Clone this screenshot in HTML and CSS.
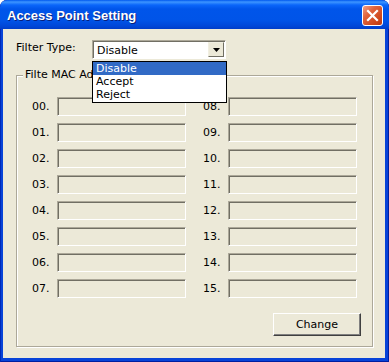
FILE: index.html
```html
<!DOCTYPE html>
<html lang="en">
<head>
    <meta charset="UTF-8">
    <title>Access Point Setting</title>
    <link rel="stylesheet" href="styles.css">
</head>
<body>
    <div class="window">
        <div class="titlebar">
            <span class="title">Access Point Setting</span>
            <span class="close">
                <svg width="13" height="13" viewBox="0 0 13 13">
                    <path d="M2 2 L11 11 M11 2 L2 11" stroke="#fff" stroke-width="2.2" stroke-linecap="square"/>
                </svg>
            </span>
        </div>
        <div class="body">
            <div class="filter-row">
                <span class="filter-label">Filter Type:</span>
                <div class="combo">
                    <span class="combo-value">Disable</span>
                    <span class="combo-arrow">
                        <svg width="7" height="4" viewBox="0 0 7 4"><path d="M0 0 H7 L3.5 4 Z" fill="#000"/></svg>
                    </span>
                    <ul class="dropdown">
                        <li class="selected">Disable</li>
                        <li>Accept</li>
                        <li>Reject</li>
                    </ul>
                </div>
            </div>
            <div class="group">
                <span class="legend">Filte MAC Address</span>
                <div class="columns">
                    <div class="column">
                        <div class="mac-row"><span class="mac-label">00.</span><span class="mac-field"></span></div>
                        <div class="mac-row"><span class="mac-label">01.</span><span class="mac-field"></span></div>
                        <div class="mac-row"><span class="mac-label">02.</span><span class="mac-field"></span></div>
                        <div class="mac-row"><span class="mac-label">03.</span><span class="mac-field"></span></div>
                        <div class="mac-row"><span class="mac-label">04.</span><span class="mac-field"></span></div>
                        <div class="mac-row"><span class="mac-label">05.</span><span class="mac-field"></span></div>
                        <div class="mac-row"><span class="mac-label">06.</span><span class="mac-field"></span></div>
                        <div class="mac-row"><span class="mac-label">07.</span><span class="mac-field"></span></div>
                    </div>
                    <div class="column">
                        <div class="mac-row"><span class="mac-label">08.</span><span class="mac-field"></span></div>
                        <div class="mac-row"><span class="mac-label">09.</span><span class="mac-field"></span></div>
                        <div class="mac-row"><span class="mac-label">10.</span><span class="mac-field"></span></div>
                        <div class="mac-row"><span class="mac-label">11.</span><span class="mac-field"></span></div>
                        <div class="mac-row"><span class="mac-label">12.</span><span class="mac-field"></span></div>
                        <div class="mac-row"><span class="mac-label">13.</span><span class="mac-field"></span></div>
                        <div class="mac-row"><span class="mac-label">14.</span><span class="mac-field"></span></div>
                        <div class="mac-row"><span class="mac-label">15.</span><span class="mac-field"></span></div>
                    </div>
                </div>
                <div class="actions">
                    <button class="btn">Change</button>
                </div>
            </div>
        </div>
    </div>
</body>
</html>
```

FILE: styles.css
```css
html,
body {
    margin: 0;
    padding: 0;
    background: #fff;
}
body {
    font-family: "DejaVu Sans", sans-serif;
    font-size: 11px;
    color: #000;
}
.window {
    width: 389px;
    height: 362px;
    box-sizing: border-box;
    display: flex;
    flex-direction: column;
    background: #0843d8;
    border-radius: 7px 7px 0 0;
    overflow: hidden;
    padding: 0 4px 4px 3px;
    box-shadow: inset 1px 0 #0029b8, inset -1px 0 #001ea0, inset 0 -1px #001ea0;
}
.titlebar {
    height: 29px;
    margin: 0 -4px 0 -3px;
    padding: 0 6px 0 7px;
    display: flex;
    align-items: center;
    justify-content: space-between;
    background: linear-gradient(to bottom, #0058ee 0, #3d95ff 2px, #0a66fa 5px, #0055ea 9px, #0054e8 20px, #0047d8 26px, #003dc8 29px);
    border-radius: 7px 7px 0 0;
}
.title {
    font-family: "Liberation Sans", sans-serif;
    font-weight: bold;
    font-size: 13px;
    color: #fff;
    text-shadow: 1px 1px #0a1e7a;
    padding-top: 2px;
}
.close {
    width: 19px;
    height: 19px;
    border: 1px solid #fff;
    border-radius: 3px;
    display: flex;
    align-items: center;
    justify-content: center;
    background: linear-gradient(135deg, #f0a085 0, #e0633c 35%, #cc4418 80%, #b83a12 100%);
    margin-top: 2px;
}
.body {
    flex: 1;
    background: #ece9d8;
    padding: 11px 0 0 13px;
    display: flex;
    flex-direction: column;
}
.filter-row {
    display: flex;
    align-items: center;
    height: 19px;
}
.filter-label {
    width: 76px;
    margin-top: -4px;
}
.combo {
    position: relative;
    width: 134px;
    height: 19px;
    box-sizing: border-box;
    background: #fff;
    border: 1px solid;
    border-color: #aca899 #fff #fff #aca899;
    box-shadow: inset 1px 1px #716f64;
    display: flex;
    align-items: center;
    justify-content: space-between;
    padding: 1px 1px 0 4px;
}
.combo-arrow {
    width: 16px;
    height: 15px;
    box-sizing: border-box;
    background: #ece9d8;
    border: 1px solid;
    border-color: #f1efe2 #716f64 #716f64 #f1efe2;
    display: flex;
    align-items: center;
    justify-content: center;
    margin-bottom: 1px;
}
.dropdown {
    position: absolute;
    left: -1px;
    top: 20px;
    width: 135px;
    margin: 0;
    padding: 0;
    list-style: none;
    box-sizing: border-box;
    background: #fff;
    border: 1px solid #000;
    padding-bottom: 1px;
    z-index: 2;
}
.dropdown li {
    height: 13px;
    line-height: 13px;
    padding-left: 3px;
}
.dropdown li.selected {
    background: #316ac5;
    color: #fff;
}
.group {
    position: relative;
    margin-top: 16px;
    width: 357px;
    height: 272px;
    box-sizing: border-box;
    border: 1px solid #aca899;
    box-shadow: inset 1px 1px #fff, 1px 1px #fff;
    padding: 21px 13px 0 15px;
    display: flex;
    flex-direction: column;
}
.legend {
    position: absolute;
    left: 6px;
    top: -8px;
    max-width: 69px;
    padding-left: 2px;
    overflow: hidden;
    white-space: nowrap;
    background: #ece9d8;
    line-height: 14px;
}
.columns {
    display: flex;
    gap: 17px;
}
.column {
    display: flex;
    flex-direction: column;
    gap: 7px;
}
.mac-row {
    display: flex;
    align-items: center;
    height: 19px;
}
.mac-label {
    width: 25px;
}
.mac-field {
    width: 129px;
    height: 19px;
    box-sizing: border-box;
    border: 1px solid;
    border-color: #aca899 #fff #fff #aca899;
    box-shadow: inset 1px 1px #716f64;
}
.actions {
    display: flex;
    justify-content: flex-end;
    margin-top: 15px;
}
.btn {
    width: 88px;
    height: 23px;
    font-family: "DejaVu Sans", sans-serif;
    font-size: 11px;
    color: #000;
    background: #ece9d8;
    border: 1px solid;
    border-color: #fff #404040 #404040 #fff;
    box-shadow: inset -1px -1px #808080;
    padding: 0;
    margin-right: -2px;
}
```
